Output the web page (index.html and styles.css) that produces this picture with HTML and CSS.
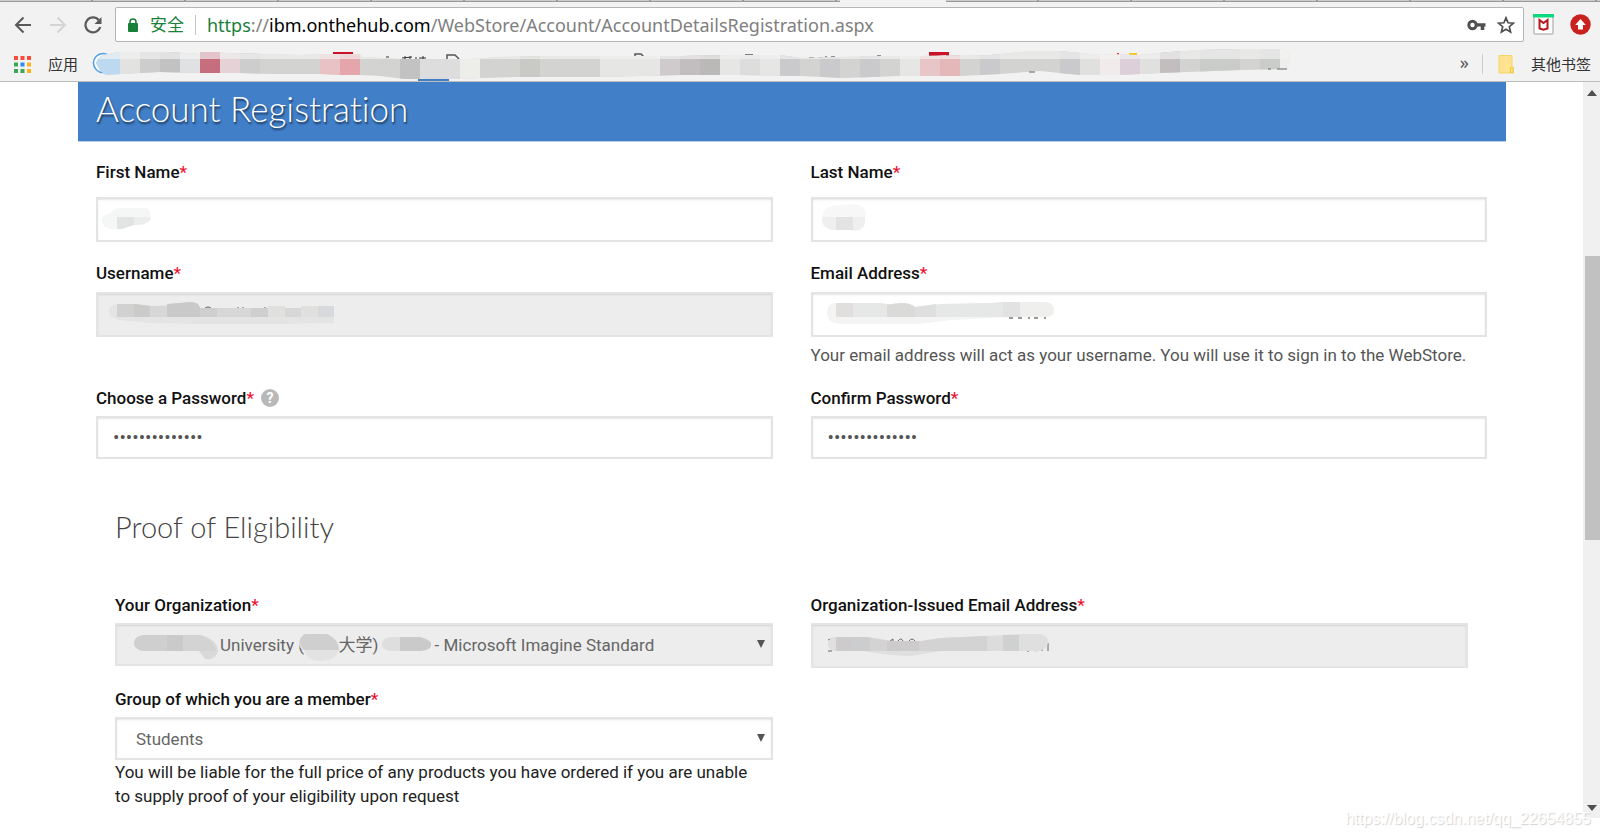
FILE: index.html
```html
<!DOCTYPE html>
<html lang="en">
<head>
<meta charset="utf-8">
<title>Account Registration</title>
<link rel="stylesheet" href="styles.css">
</head>
<body>
<div class="browser">
  <div class="tab-edge"><div class="tabs-left"></div><div class="tabs-right"></div></div>
  <div class="toolbar">
    <button class="icon-btn" aria-label="Back"><svg width="18" height="18" viewBox="0 0 18 18" fill="none" stroke="#5a5a5a" stroke-width="2"><path d="M17 9H2M9.5 1.500 2 9l7.500 7.500"/></svg></button>
    <button class="icon-btn" aria-label="Forward"><svg width="18" height="18" viewBox="0 0 18 18" fill="none" stroke="#d4d4d4" stroke-width="2"><path d="M1 9h15M8.500 1.500 16 9l-7.500 7.500"/></svg></button>
    <button class="icon-btn" aria-label="Reload"><svg width="18" height="18" viewBox="0 0 18 18"><path d="M14.800 4.200A7.500 7.500 0 1 0 16.200 11" fill="none" stroke="#5a5a5a" stroke-width="2.200"/><path d="M17.500 1v7h-7z" fill="#5a5a5a"/></svg></button>
    <div class="omnibox">
      <svg class="lock" width="12" height="14" viewBox="0 0 12 14"><rect x="1" y="5" width="10" height="9" rx="1" fill="#188038"/><path d="M3 6V4a3 3 0 0 1 6 0v2" fill="none" stroke="#188038" stroke-width="1.600"/></svg>
      <span class="secure">安全</span>
      <div class="url" role="textbox" aria-label="Address" contenteditable="true" spellcheck="false"><span class="url-scheme">https</span>://<span class="url-host">ibm.onthehub.com</span>/WebStore/Account/AccountDetailsRegistration.aspx</div>
      <button class="icon-btn" aria-label="Saved passwords"><svg width="19" height="12" viewBox="0 0 19 12"><circle cx="5.500" cy="6" r="3.700" fill="none" stroke="#505050" stroke-width="3"/><path d="M9 4.200h9.500v3.300h-1.200V11h-3.600V7.500H9z" fill="#505050"/></svg></button>
      <button class="icon-btn" aria-label="Bookmark"><svg width="18" height="18" viewBox="0 0 18 18"><path d="M9 1.800l2.100 5 5.300.4-4.100 3.500 1.300 5.300L9 13.200 4.400 16l1.300-5.300-4.100-3.500 5.300-.4z" fill="none" stroke="#505050" stroke-width="1.700"/></svg></button>
    </div>
    <div class="extensions">
      <button class="icon-btn" aria-label="Site advisor"><svg width="21" height="21" viewBox="0 0 21 21"><rect x="1" y="1" width="19" height="19" rx="1" fill="#fff" stroke="#bdbdbd" stroke-width="1.500"/><path d="M0 0h21v3.500H0z" fill="#0bd97b"/><path d="M6.500 6v8.500l4 1.300 4-1.300V6l-4 3z" fill="none" stroke="#b8151f" stroke-width="2"/></svg></button>
      <button class="icon-btn" aria-label="Update"><svg width="21" height="21" viewBox="0 0 21 21"><circle cx="10.500" cy="10.500" r="10.200" fill="#c9211e"/><path d="M10.500 5l5.300 6H13v4.500H8V11H5.200z" fill="#fff"/></svg></button>
    </div>
  </div>
  <div class="bookmarks">
    <a class="apps" href="#"><svg width="17" height="17" viewBox="0 0 17 17"><g fill="#fa4b3a"><path d="M0 0h4v4H0zM6.500 0h4v4h-4zM13 0h4v4h-4z"/></g><path d="M0 6.500h4v4H0zM0 13h4v4H0zM6.500 13h4v4h-4z" fill="#3aa757"/><path d="M6.500 6.500h4v4h-4z" fill="#2a8cf4"/><path d="M13 6.500h4v4h-4zM13 13h4v4h-4z" fill="#fbb11a"/></svg>应用</a>
    <svg class="blurred-links" width="1200" height="32" viewBox="92 50 1200 32" aria-hidden="true">
      <defs><clipPath id="bm"><path d="M96 64Q98 56 108 55L120 53H170L200 55V53H223V54L300 56L325 55H360L362 58L400 60H470L500 58 560 57 600 57 680 57 740 56 780 56 800 59 840 58 880 57 920 57 990 56 1030 52H1060L1090 55 1140 56 1170 53 1200 51 1240 50H1281Q1290 52 1290 60L1287 70 1240 71 1160 74 1120 76 1080 76 1040 72 1000 75 960 77 900 77 845 79 800 77 740 76 680 76 600 78 520 78 480 79 460 80H405L380 77 360 76 340 76 320 75H270L240 74 200 74 160 73 120 75 107 76Q100 74 96 64z"/></clipPath></defs>
      <circle cx="103" cy="64" r="9.500" fill="#fff" stroke="#4c9eea" stroke-width="1.500"/>
      <path d="M333 53h20v4h-20z" fill="#c9132a"/>
      <path d="M386 58h3M402 59l10-1M405 57v4M410 57v4M416 58v3M419 59h7M423 57v4" stroke="#333"/>
      <path d="M447 61v-5h8l4 4M635 60v-5h6l3 3M745 56h8" fill="none" stroke="#555" stroke-width="1.500"/>
      <path d="M809 59h5M819 59h4M826 57v3M831 58h4M877 57h4" stroke="#333"/>
      <path d="M929 53h20v5h-3v-2l-8 1-3 2h-6z" fill="#c9132a"/>
      <path d="M1129 54h8v3h-8z" fill="#f5c813"/><path d="M1117 54h2v2h-2z" fill="#e33"/>
      <path d="M418 80h31v2h-31z" fill="#417fc9"/>
      <g clip-path="url(#bm)">
        <path fill="#d3d3d2" d="M92 50h1200v32H92z"/>
        <path fill="#bdd9f1" d="M92 50h28v32H92z"/><path fill="#e2e2e0" d="M120 50h20v32h-20z"/><path fill="#cdcdcd" d="M140 50h20v32h-20zM240 50h20v32h-20z"/><path fill="#c2c2c2" d="M160 50h20v32h-20zM400 50h20v32h-20z"/><path fill="#dfe1e2" d="M180 50h20v32h-20z"/>
        <path fill="#c76e7e" d="M200 50h20v32h-20z"/><path fill="#e5d2d6" d="M220 50h20v32h-20z"/><path fill="#e9c2c6" d="M320 50h20v32h-20z"/><path fill="#e4a5ab" d="M340 50h20v32h-20z"/>
        <path fill="#dddddd" d="M420 50h40v32h-40zM740 50h20v32h-20z"/><path fill="#ededea" d="M460 50h20v32h-20z"/><path fill="#c9c9c6" d="M520 50h20v32h-20z"/><path fill="#e6e6e5" d="M600 50h60v32h-60zM720 50h20v32h-20zM760 50h20v32h-20zM900 50h20v32h-20z"/>
        <path fill="#cfcbcd" d="M660 50h20v32h-20z"/><path fill="#c2bec0" d="M680 50h20v32h-20zM1160 50h20v32h-20z"/><path fill="#bbb9b7" d="M700 50h20v32h-20z"/><path fill="#cacacc" d="M780 50h20v32h-20zM820 50h20v32h-20zM860 50h20v32h-20zM980 50h20v32h-20zM1060 50h20v32h-20z"/>
        <path fill="#e8c5c7" d="M920 50h20v32h-20z"/><path fill="#e4b8b9" d="M940 50h20v32h-20z"/><path fill="#e0e0de" d="M1080 50h20v32h-20zM1140 50h20v32h-20z"/><path fill="#f1ebeb" d="M1100 50h20v32h-20z"/><path fill="#dccfda" d="M1120 50h20v32h-20z"/><path fill="#caccca" d="M1200 50h40v32h-40zM1260 50h20v32h-20z"/><path fill="#eeeeec" d="M1280 50h12v32h-12z"/>
        <path fill="#f2f2f2" fill-opacity=".65" d="M92 50h1200v10H92z"/>
      </g>
      <path d="M1029 73h6M1268 70h3M1277 70h10" stroke="#666"/>
    </svg>
    <button class="more" aria-label="More bookmarks">»</button>
    <a class="others" href="#"><svg width="16" height="19" viewBox="0 0 16 19"><path d="M1 .5h13v12h1.500v5.500H1z" fill="#ffe391" stroke="#f5d565"/><path d="M12.500 17.500v-5h2.500v5z" fill="#ffe391" stroke="#f0c93c"/></svg>其他书签</a>
  </div>
</div>

<div class="viewport">
  <main class="page">
    <h1 class="banner">Account Registration</h1>
    <form class="form">
      <div class="grid">
        <div class="field roomy">
          <label for="first">First Name<b>*</b></label>
          <div class="control"><input id="first" type="text">
            <svg class="mask" width="240" height="40" viewBox="0 0 240 40" aria-hidden="true"><path d="M17 32Q6 31 6 24T14 17Q18 11 24 11H50Q56 13 54 23 52 29 36 28L26 32z" fill="#f5f6f6"/><path d="M21 20h17v8l-12 4h-5z" fill="#e2e3e3"/><path d="M38 20h17q-1 8-17 8z" fill="#ededed"/></svg></div>
        </div>
        <div class="field roomy">
          <label for="last">Last Name<b>*</b></label>
          <div class="control"><input id="last" type="text">
            <svg class="mask" width="240" height="40" viewBox="0 0 240 40" aria-hidden="true"><path d="M22 33Q11 32 11 23 11 9 24 9L40 7Q54 8 55 16L53 29Q48 37 40 33z" fill="#f7f7f7"/><path d="M11 20h43q2 15-14 13H22Q11 32 11 20z" fill="#efefef"/><path d="M25 20h17v13H25z" fill="#e3e3e3"/></svg></div>
        </div>
        <div class="field">
          <label for="user">Username<b>*</b></label>
          <div class="control"><input id="user" type="text" disabled>
            <svg class="mask" width="260" height="40" viewBox="0 0 260 40" aria-hidden="true"><path d="M108 17q4-4 8 0M142 15v3M147 15v3M169 15v3" fill="none" stroke="#666"/><path d="M21 12H40L58 14 85 11Q103 8 104 16H226V31L190 32H100L60 31 30 29Q13 27 13 20T21 12z" fill="#e4e4e4"/><path d="M226 14h12v17h-12z" fill="#e4e4e4"/><path d="M21 12H38L54 14H71L94 10Q103 10 104 16H238V25H21z" fill="#d6d7d6"/><path d="M21 12H38V25H21z" fill="#d1d1d1"/><path d="M38 12L54 14V25H38z" fill="#cbcbc9"/><path d="M71 12L94 10Q103 10 104 16V25H71z" fill="#cac9ca"/><path d="M104 16H121V25H104zM155 16h17v9h-17z" fill="#cfcfd0"/><path d="M172 14h17v11h-17zM205 14h17v11h-17z" fill="#e0e0de"/><path d="M222 14h16v11h-16z" fill="#d8d9dc"/></svg></div>
        </div>
        <div class="field">
          <label for="email">Email Address<b>*</b></label>
          <div class="control"><input id="email" type="email">
            <svg class="mask" width="260" height="40" viewBox="0 0 260 40" aria-hidden="true"><path d="M198 26h4M207 26h4M217 26h2M223 26h4M234 25v2" stroke="#999" stroke-width="2"/><path d="M25 11H70L82 13Q95 8 104 15L130 12 180 11 192 10H235Q243 12 243 17T236 25H200L140 28 108 32H30Q16 31 16 21T25 11z" fill="#f4f4f4"/><path d="M25 11H70L82 13Q95 8 104 15L130 12 180 11 192 10H209V25H25z" fill="#e6e7e7"/><path d="M25 11h17v14H25z" fill="#e0dfde"/><path d="M76 13Q95 8 104 15V25H76z" fill="#dadad8"/><path d="M104 15l21-3v13h-21z" fill="#dfdfdf"/><path d="M192 10h17v15h-17z" fill="#e2e2e2"/><path d="M209 10h26q8 2 8 8 0 7-8 7h-26z" fill="#efefee"/></svg></div>
          <p class="hint">Your email address will act as your username. You will use it to sign in to the WebStore.</p>
        </div>
        <div class="field short">
          <div class="label-row"><label for="pw">Choose a Password<b>*</b></label><button type="button" class="help" aria-label="Password help">?</button></div>
          <div class="control"><input id="pw" type="password" value="12345678901234"></div>
        </div>
        <div class="field short">
          <label for="pw2">Confirm Password<b>*</b></label>
          <div class="control"><input id="pw2" type="password" value="12345678901234"></div>
        </div>
      </div>
      <section class="proof">
        <h2>Proof of Eligibility</h2>
        <div class="grid">
          <div class="field short">
            <label for="org">Your Organization<b>*</b></label>
            <div class="control"><select id="org" class="org" disabled><option>University (&emsp;&ensp;&nbsp;&nbsp;大学)&emsp;&emsp;&emsp;&nbsp;- Microsoft Imagine Standard</option></select>
              <svg class="mask" width="330" height="40" viewBox="0 0 330 40" aria-hidden="true"><path d="M28 12H85Q102 16 103 28 100 38 90 36L84 28H28Q19 26 19 20T28 12z" fill="#d9d9d9"/><path d="M28 12h24v16H28Q19 26 19 20T28 12z" fill="#cfcfcf"/><path d="M52 12h16v16H52z" fill="#cbcacb"/><path d="M68 12h17q12 3 16 16H68z" fill="#d3d3d3"/><path d="M192 11H212Q225 16 224 27 220 38 206 38T190 28Q184 26 184 20T192 11z" fill="#e3e3e3"/><path d="M190 11h22q12 6 12 16h-35q-9-10 1-16z" fill="#cfcfcf"/><path d="M277 14H305Q317 17 316 22 315 27 306 28H277Q267 28 267 21T277 14z" fill="#dedede"/><path d="M285 14h20q12 3 11 8 0 5-10 6h-21z" fill="#cacacb"/></svg>
              <svg class="arrow" width="8" height="8" viewBox="0 0 8 8"><path d="M0 0h8L4 8z" fill="#555"/></svg></div>
          </div>
          <div class="field short tall">
            <label for="orgmail">Organization-Issued Email Address<b>*</b></label>
            <div class="control"><input id="orgmail" type="email" disabled>
              <svg class="mask" width="260" height="40" viewBox="0 0 260 40" aria-hidden="true"><path d="M17 17l3-1v3M17 28h4M79 18l3-2v3M87 18q3-4 5 0M98 18q3-4 6 0M216 28h2M222 27q4 2 6-1M231 28v-4M237 20v8" fill="none" stroke="#666"/><path d="M24 14H56L80 18H110L130 15 175 13 208 11H230Q238 14 237 20T228 28H130L100 33 80 32 50 28H24Q17 27 17 21T24 14z" fill="#dedfde"/><path d="M25 14H56L80 18H110L130 15 175 13H208V28H25z" fill="#d3d3d3"/><path d="M25 14h16v14H25zM76 18h32v10H76z" fill="#cdcbcb"/><path d="M41 14h15l3 1v13H41z" fill="#cccdcf"/><path d="M176 13h16v15h-16z" fill="#dcdcdc"/><path d="M192 12h16v16h-16z" fill="#cfd1d0"/></svg></div>
          </div>
          <div class="field short">
            <label for="group">Group of which you are a member<b>*</b></label>
            <div class="control"><select id="group"><option>Students</option></select>
              <svg class="arrow" width="8" height="8" viewBox="0 0 8 8"><path d="M0 0h8L4 8z" fill="#555"/></svg></div>
            <p class="notice">You will be liable for the full price of any products you have ordered if you are unable to supply proof of your eligibility upon request</p>
          </div>
        </div>
      </section>
    </form>
  </main>
  <div class="scrollbar" aria-hidden="true">
    <svg width="10" height="6" viewBox="0 0 10 6"><path d="M0 6h10L5 0z" fill="#505050"/></svg>
    <div class="track"><div class="thumb"></div></div>
    <svg width="10" height="6" viewBox="0 0 10 6"><path d="M0 0h10L5 6z" fill="#505050"/></svg>
  </div>
</div>
<div class="watermark">https://blog.csdn.net/qq_22654855</div>
</body>
</html>
```
FILE: styles.css
```css
* { box-sizing: border-box; }

body {
  margin: 0;
  min-height: 100vh;
  display: flex;
  flex-direction: column;
  position: relative;
  overflow: hidden;
  background: #fff;
  color: #222;
  font: 17px/24px Roboto, "Noto Sans CJK SC", sans-serif;
}

p, h1, h2 { margin: 0; }
svg { display: block; flex: none; }
a { color: inherit; text-decoration: none; }

/* Browser chrome */
.browser {
  background: #f2f2f2;
  border-bottom: 1px solid #bdbdbd;
  font-family: "Noto Sans", "Noto Sans CJK SC", sans-serif;
}
.tab-edge { display: flex; gap: 106px; height: 2px; }
.tabs-left, .tabs-right {
  border-bottom: 1px solid #999;
  background: repeating-linear-gradient(90deg, #ccc 0 91px, #999 91px 93px);
}
.tabs-left { flex: 840; }
.tabs-right { flex: 654; }

.toolbar {
  display: flex;
  align-items: center;
  height: 45px;
  padding: 0 9px 0 14px;
  gap: 17px;
}
.icon-btn {
  border: 0;
  padding: 0;
  background: none;
  display: flex;
  align-items: center;
}
.omnibox {
  flex: 1;
  display: flex;
  align-items: center;
  height: 35px;
  margin-left: -4px;
  padding: 0 8px 0 11px;
  border: 1px solid #b5b5b5;
  border-radius: 2px;
  background: #fff;
  gap: 11px;
}
.secure {
  color: #188038;
  font-size: 17px;
  padding-right: 11px;
  border-right: 1px solid #c4c4c4;
  line-height: 20px;
}
.url {
  flex: 1;
  color: #808080;
  font-size: 18px;
  white-space: nowrap;
}
.url-scheme { color: #188038; }
.url-host { color: #000; }
.extensions { display: flex; gap: 16px; margin-left: -8px; }

.bookmarks {
  display: flex;
  align-items: center;
  height: 34px;
  padding: 0 9px 0 14px;
  font-size: 15px;
  color: #333;
}
.apps { display: flex; align-items: center; gap: 17px; }
.blurred-links { margin: 2px 0 0 14px; }
.more {
  margin-left: auto;
  padding: 0 13px 4px 0;
  border: 0;
  background: none;
  font: 18px/20px "Noto Sans", sans-serif;
  color: #555;
}
.others {
  display: flex;
  align-items: center;
  gap: 17px;
  padding-left: 15px;
  border-left: 1px solid #ccc;
  line-height: 20px;
}

/* Page */
.viewport { flex: 1; display: flex; margin-bottom: 19px; }
.page { flex: 1; padding: 0 77px 0 78px; }
.banner {
  height: 60px;
  padding: 0 18px;
  border-bottom: 1px solid #b5cdea;
  background: #417fc9;
  color: #fff;
  font: 300 35px/52px Lato, sans-serif;
  font-variant-ligatures: none;
  text-shadow: 1px 2px 2px rgba(0, 0, 0, .6);
}
.form { padding: 18px 19px 0 18px; }
.grid {
  display: grid;
  grid-template-columns: 1fr 1fr;
  column-gap: 38px;
  row-gap: 19px;
}
.field label { display: block; color: #111; font-weight: 500; }
.field b { color: #f0142f; font-weight: 500; }
.label-row { display: flex; align-items: center; gap: 7px; }
.help {
  width: 18px;
  height: 18px;
  padding: 0;
  border: 0;
  border-radius: 50%;
  background: #b9b9b9;
  color: #fff;
  font: 700 14px/18px Roboto, sans-serif;
}
.control { position: relative; margin-top: 7px; }
.roomy .control { margin-top: 13px; }
.short .control { margin-top: 6px; }
.control input, .control select {
  display: block;
  width: 100%;
  height: 45px;
  margin: 0;
  padding: 0 15px;
  border: 2px solid #e4e4e4;
  border-radius: 0;
  background: #fff;
  box-shadow: inset 0 1px 2px rgba(0, 0, 0, .1);
  color: #555;
  font: inherit;
  opacity: 1;
  appearance: none;
}
.short .control input, .short .control select { height: 43px; }
.tall .control input { height: 45px; }
.control input[type="password"] { font-size: 19px; }
.control select { padding: 0 19px; color: #666; }
.control input:disabled, .control select:disabled { background: #ededed; }
.control .org { padding-left: 103px; }
.mask { position: absolute; left: 0; top: 0; pointer-events: none; }
.arrow { position: absolute; right: 8px; top: 17px; pointer-events: none; }
.hint { margin-top: 6px; color: #555; }
.notice { padding-right: 8px; }
.proof { padding: 48px 19px 0; }
.proof h2 {
  margin-bottom: 46px;
  color: #444;
  font: 300 29px/40px Lato, sans-serif;
  font-variant-ligatures: none;
}

.scrollbar {
  width: 17px;
  padding: 8px 0 7px;
  background: #f0f0f0;
  display: flex;
  flex-direction: column;
  align-items: center;
}
.track {
  flex: 1;
  width: 100%;
  padding-left: 2px;
  display: grid;
  grid-template-rows: 160fr 284fr 265fr;
}
.thumb { grid-row: 2; background: #c1c1c1; }

.watermark {
  position: absolute;
  right: 9px;
  bottom: 6px;
  color: #fff;
  font: 16px/24px "Liberation Sans", Arial, sans-serif;
  text-shadow: 1px 1px 1px #d0d0d0;
}
```
